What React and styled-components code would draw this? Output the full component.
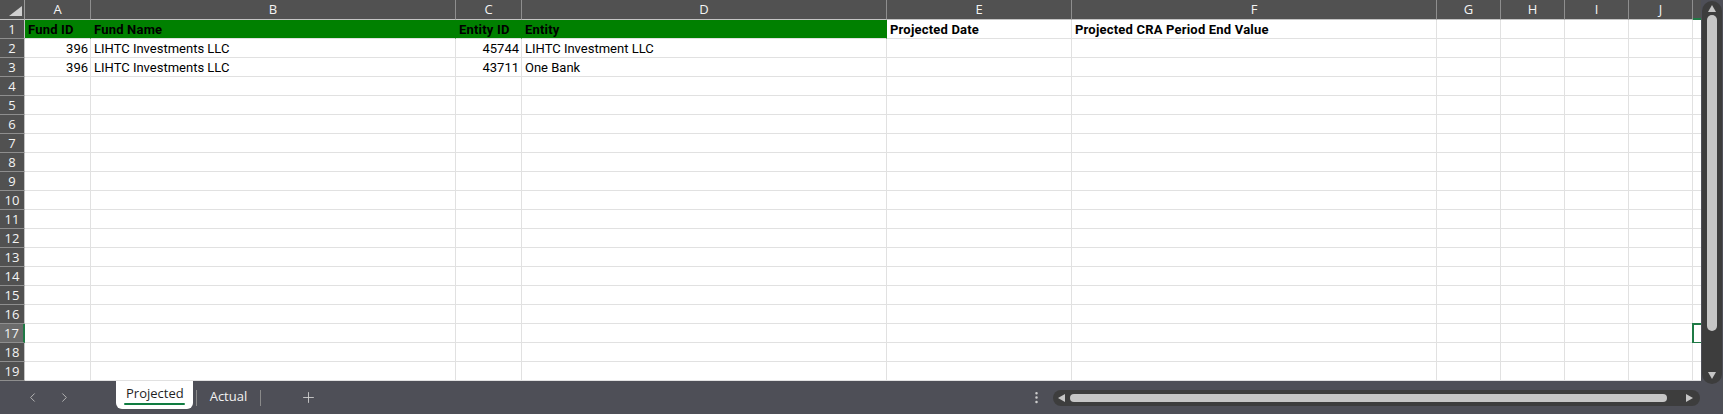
import React from 'react'
import styled, {createGlobalStyle} from 'styled-components'
import {ChevronLeft, ChevronRight, Plus, EllipsisVertical} from 'lucide-react'

const GlobalStyle = createGlobalStyle`
  html, body { margin: 0; padding: 0; background: #4e4f57; overflow: hidden; }
  * { box-sizing: border-box; }
`

const COLS = [
  {key: 'A', w: 66}, {key: 'B', w: 365}, {key: 'C', w: 66}, {key: 'D', w: 365},
  {key: 'E', w: 185}, {key: 'F', w: 365}, {key: 'G', w: 64}, {key: 'H', w: 64},
  {key: 'I', w: 64}, {key: 'J', w: 64}, {key: 'K', w: 64, hidden: true},
]

// row -> { col: {text, num, head, fill} }
const DATA = {
  1: {
    A: {text: 'Fund ID', head: true, fill: true},
    B: {text: 'Fund Name', head: true, fill: true},
    C: {text: 'Entity ID', head: true, fill: true},
    D: {text: 'Entity', head: true, fill: true},
    E: {text: 'Projected Date', head: true},
    F: {text: 'Projected CRA Period End Value', head: true},
  },
  2: {
    A: {text: '396', num: true},
    B: {text: 'LIHTC Investments LLC'},
    C: {text: '45744', num: true},
    D: {text: 'LIHTC Investment LLC'},
  },
  3: {
    A: {text: '396', num: true},
    B: {text: 'LIHTC Investments LLC'},
    C: {text: '43711', num: true},
    D: {text: 'One Bank'},
  },
}

const ROWS = 19
const ACTIVE = {row: 17, col: 'K'}

const Window = styled.div`
  width: 1723px;
  height: 414px;
  display: flex;
  flex-direction: column;
  background: #4e4f57;
`

const Main = styled.div`
  display: flex;
  height: 381px;
`

const Sheet = styled.div`
  width: 1701px;
  height: 381px;
  overflow: hidden;
  background: #fff;
`

const Grid = styled.div`
  display: grid;
  grid-template-columns: ${p => p.$cols};
  grid-template-rows: 20px;
  grid-auto-rows: 19px;
  width: max-content;
`

const Corner = styled.div`
  background: #515151;
  border-right: 1px solid #9a9a9a;
  border-bottom: 1px solid #c4c4c4;
  display: flex;
  align-items: flex-end;
  justify-content: flex-end;
  padding: 0 2px 3px 0;
`

const ColHead = styled.div`
  background: #515151;
  color: #f4f4f4;
  font: 400 13px/19px "Open Sans", sans-serif;
  text-align: center;
  border-right: 1px solid #8e8e8e;
  border-bottom: ${p => (p.$active ? '2px solid #1f7a45' : '1px solid #c4c4c4')};
`

const RowHead = styled.div`
  background: ${p => (p.$active ? '#6b6b6b' : '#515151')};
  color: #f4f4f4;
  font: 400 13px/18px "Open Sans", sans-serif;
  text-align: center;
  border-bottom: 1px solid #8e8e8e;
  border-right: ${p => (p.$active ? '2px solid #1f7a45' : '1px solid #c4c4c4')};
`

const Cell = styled.div`
  background: ${p => (p.$fill ? '#008000' : '#fff')};
  color: #000;
  font: ${p => (p.$head ? 700 : 400)} 13px/19px Roboto, "Liberation Sans", sans-serif;
  letter-spacing: ${p => (p.$head ? '0.2px' : '0')};
  text-align: ${p => (p.$num ? 'right' : 'left')};
  padding: 0 2px 0 3px;
  white-space: nowrap;
  overflow: hidden;
  border-right: 1px solid ${p => (p.$fill ? '#008000' : '#e1e1e1')};
  border-bottom: 1px solid #e1e1e1;
  ${p => p.$active && 'outline: 2px solid #1f7a45; outline-offset: -1px;'}
`

const VScroll = styled.div`
  width: 22px;
  height: 384px;
  padding: 1px 1px 0 1px;
  position: relative;
  z-index: 1;
  background: #4e4f57;
`

const VTrack = styled.div`
  height: 100%;
  background: #3d3d3d;
  border-radius: 10px;
  display: flex;
  flex-direction: column;
  align-items: center;
  padding: 4px 0 5px;
`

const VThumb = styled.div`
  width: 10px;
  height: 316px;
  margin-top: 3px;
  background: #c6c6c6;
  border-radius: 5px;
`

const Spring = styled.div`
  flex: 1;
`

const Bottom = styled.div`
  height: 33px;
  display: flex;
  align-items: flex-start;
`

const Nav = styled.div`
  width: 116px;
  height: 33px;
  display: flex;
  align-items: center;
  gap: 17px;
  padding-left: 25px;
  color: #b4b4b4;
`

const Tab = styled.div`
  position: relative;
  height: ${p => (p.$active ? '28px' : '30px')};
  padding: 0 ${p => (p.$active ? '9px 4px 10px' : '10px 1px')};
  display: flex;
  align-items: center;
  font: ${p => (p.$active ? 500 : 400)} 13px "Open Sans", sans-serif;
  color: ${p => (p.$active ? '#1f1f1f' : '#f2f2f2')};
  background: ${p => (p.$active ? '#fff' : 'transparent')};
  border-radius: 0 0 6px 6px;
`

const Underline = styled.span`
  position: absolute;
  left: 8px;
  right: 8px;
  bottom: 4px;
  height: 2px;
  background: #107c41;
  border-radius: 1px;
`

const Sep = styled.div`
  width: 1px;
  height: 16px;
  margin: 9px 3px 0;
  background: #8a8a8a;
`

const AddBtn = styled.div`
  height: 33px;
  display: flex;
  align-items: center;
  margin-left: 36px;
  color: #d4d4d4;
`

const Dots = styled.div`
  height: 33px;
  display: flex;
  align-items: center;
  margin-right: 9px;
  color: #cfcfcf;
`

const HTrack = styled.div`
  width: 647px;
  height: 16px;
  margin: 9px 23px 0 0;
  background: #3d3d3d;
  border-radius: 8px;
  display: flex;
  align-items: center;
  padding: 0 7px 0 5px;
`

const HThumb = styled.div`
  width: 597px;
  height: 8px;
  margin-left: 5px;
  background: #c6c6c6;
  border-radius: 4px;
`

const Tri = ({dir}) => {
  const pts = {
    up: '0,7 4,0 8,7',
    down: '0,0 8,0 4,7',
    left: '7,0 7,8 0,4',
    right: '0,0 7,4 0,8',
  }[dir]
  const vert = dir === 'up' || dir === 'down'
  return (
    <svg width={vert ? 8 : 7} height={vert ? 7 : 8} viewBox={vert ? '0 0 8 7' : '0 0 7 8'}>
      <polygon points={pts} fill="#c6c6c6"/>
    </svg>
  )
}

const SheetGrid = () => {
  const template = '25px ' + COLS.map(c => c.w + 'px').join(' ')
  const rows = []
  for (let r = 1; r <= ROWS; r++) {
    rows.push(<RowHead key={'h' + r} $active={r === ACTIVE.row}>{r}</RowHead>)
    COLS.forEach(c => {
      const d = (DATA[r] && DATA[r][c.key]) || {}
      rows.push(
        <Cell key={c.key + r} $num={d.num} $head={d.head} $fill={d.fill}
          $active={r === ACTIVE.row && c.key === ACTIVE.col}>
          {d.text}
        </Cell>
      )
    })
  }
  return (
    <Sheet>
      <Grid $cols={template}>
        <Corner>
          <svg width="13" height="10" viewBox="0 0 13 10"><polygon points="13,0 13,10 0,10" fill="#cfcfcf"/></svg>
        </Corner>
        {COLS.map(c =>
          <ColHead key={c.key} $active={c.key === ACTIVE.col}>{c.hidden ? '' : c.key}</ColHead>
        )}
        {rows}
      </Grid>
    </Sheet>
  )
}

const App = () =>
  <>
    <GlobalStyle/>
    <Window>
      <Main>
        <SheetGrid/>
        <VScroll>
          <VTrack>
            <Tri dir="up"/>
            <VThumb/>
            <Spring/>
            <Tri dir="down"/>
          </VTrack>
        </VScroll>
      </Main>
      <Bottom>
        <Nav>
          <ChevronLeft size={15} strokeWidth={1.6}/>
          <ChevronRight size={15} strokeWidth={1.6}/>
        </Nav>
        <Tab $active>Projected<Underline/></Tab>
        <Sep/>
        <Tab>Actual</Tab>
        <Sep/>
        <AddBtn><Plus size={17} strokeWidth={1.2}/></AddBtn>
        <Spring/>
        <Dots><EllipsisVertical size={15} strokeWidth={2}/></Dots>
        <HTrack>
          <Tri dir="left"/>
          <HThumb/>
          <Spring/>
          <Tri dir="right"/>
        </HTrack>
      </Bottom>
    </Window>
  </>

export default App
